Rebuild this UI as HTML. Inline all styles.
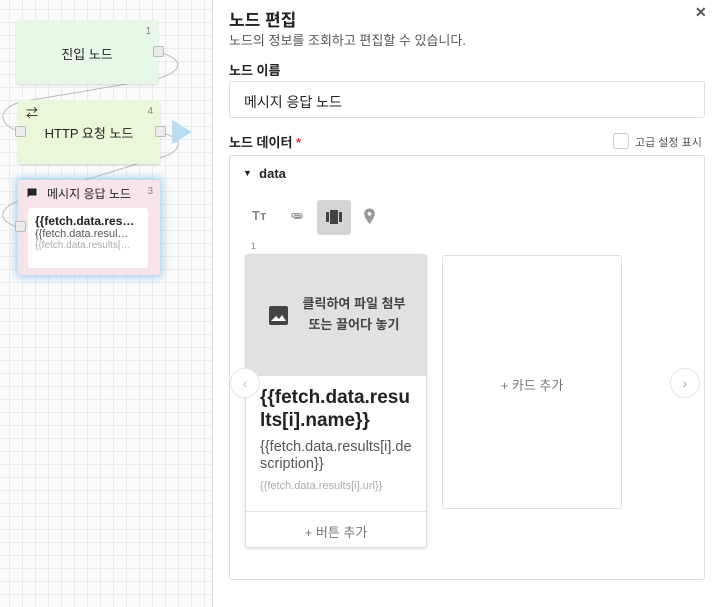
<!DOCTYPE html>
<html><head><meta charset="utf-8"><style>
*{box-sizing:border-box;margin:0;padding:0}
body{width:717px;height:607px;overflow:hidden;position:relative;background:#fff;font-family:"Liberation Sans","Noto Sans CJK KR",sans-serif;color:#222}
.canvas{position:absolute;left:0;top:0;width:213px;height:607px;background-color:#fbfbfb;background-image:linear-gradient(#ebebeb 1px,transparent 1px),linear-gradient(90deg,#ebebeb 1px,transparent 1px);background-size:13px 13px;background-position:-4px -4px;border-right:1px solid #d8d8d8}
.node{position:absolute;border-radius:3px;box-shadow:0 1px 2px rgba(0,0,0,.15);font-size:13px}
.num{position:absolute;right:7px;top:6px;font-size:10px;color:#888}
.port{position:absolute;width:11px;height:11px;background:#ececec;border:1px solid #bbb;border-radius:2px}
.abs{position:absolute}
</style></head><body>
<div class="canvas">
<svg class="abs" style="left:0;top:0" width="213" height="300">
<path d="M158 52 C190 60 180 75 150 80 L20 102 C-5 110 0 125 18 131" stroke="#bbb" fill="none" stroke-width="1"/>
<path d="M160 132 C190 140 180 155 150 160 L20 200 C-5 210 0 222 18 227" stroke="#bbb" fill="none" stroke-width="1"/>
<path d="M172 120 L192 132 L172 144 Z" fill="#b9dcf2"/>
</svg>
<div class="node" style="left:16px;top:20px;width:142px;height:64px;background:#e8f8e6"><span class="num">1</span><div class="abs" style="left:0;right:0;top:24px;text-align:center">진입 노드</div><div class="port" style="left:137px;top:26px"></div></div>
<div class="node" style="left:18px;top:100px;width:142px;height:64px;background:#eaf7d9"><span class="num">4</span><div class="abs" style="left:8px;top:4px;font-size:12px">⇄</div><div class="abs" style="left:0;right:0;top:23px;text-align:center">HTTP 요청 노드</div><div class="port" style="left:-3px;top:26px"></div><div class="port" style="left:137px;top:26px"></div></div>
<div class="node" style="left:18px;top:180px;width:142px;height:95px;background:#f6e4ea;box-shadow:0 0 8px 3px rgba(120,190,240,.6)"><span class="num">3</span>
<svg class="abs" style="left:8px;top:7px" width="12" height="12" viewBox="0 0 24 24"><path d="M3 3h18v14H7l-4 4z" fill="#222"/></svg>
<div class="abs" style="left:29px;top:5px;font-size:12px">메시지 응답 노드</div>
<div class="abs" style="left:10px;top:28px;width:120px;height:60px;background:#fff;border-radius:3px;padding:6px 7px;overflow:hidden;white-space:nowrap">
<div style="font-weight:bold;font-size:12px">{{fetch.data.res…</div>
<div style="font-size:11px;color:#555">{{fetch.data.resul…</div>
<div style="font-size:10px;color:#aaa">{{fetch.data.results[…</div></div>
<div class="port" style="left:-3px;top:41px"></div></div>
</div>

<div class="abs" style="left:229px;top:6px;font-size:17px;font-weight:bold">노드 편집</div>
<div class="abs" style="left:695px;top:4px;font-size:14px;font-weight:bold;color:#555">✕</div>
<div class="abs" style="left:229px;top:30px;font-size:13px;color:#555">노드의 정보를 조회하고 편집할 수 있습니다.</div>
<div class="abs" style="left:229px;top:60px;font-size:13px;font-weight:bold">노드 이름</div>
<div class="abs" style="left:229px;top:81px;width:476px;height:37px;border:1px solid #ddd;border-radius:3px;padding:10px 14px;font-size:14px">메시지 응답 노드</div>
<div class="abs" style="left:229px;top:132px;font-size:13px;font-weight:bold">노드 데이터 <span style="color:#d33">*</span></div>
<div class="abs" style="left:613px;top:133px;width:16px;height:16px;border:1px solid #ccc;border-radius:3px"></div>
<div class="abs" style="left:635px;top:134px;font-size:11px;color:#555">고급 설정 표시</div>
<div class="abs" style="left:229px;top:155px;width:476px;height:425px;border:1px solid #ddd;border-radius:3px"></div>
<div class="abs" style="left:243px;top:166px;font-size:13px;font-weight:bold"><span style="font-size:9px;vertical-align:2px">▼</span>&nbsp; data</div>
<div class="abs" style="left:252px;top:208px;font-size:13px;font-weight:bold;color:#888">Tт</div>
<svg class="abs" style="left:289px;top:209px" width="16" height="14" viewBox="0 0 24 24"><path d="M7 16h10a4 4 0 0 0 0-8H6a3 3 0 0 0 0 6h10a1.5 1.5 0 0 0 0-3H7" stroke="#999" stroke-width="2.2" fill="none"/></svg>
<div class="abs" style="left:317px;top:200px;width:34px;height:35px;background:#d5d5d5;border-radius:3px"></div>
<svg class="abs" style="left:325px;top:209px" width="18" height="16" viewBox="0 0 18 16"><rect x="5" y="1" width="8" height="14" fill="#444"/><rect x="1" y="3" width="3" height="10" fill="#444"/><rect x="14" y="3" width="3" height="10" fill="#444"/></svg>
<svg class="abs" style="left:363px;top:208px" width="13" height="17" viewBox="0 0 24 32"><path d="M12 1C6 1 2 5.5 2 11c0 7 10 19 10 19s10-12 10-19C22 5.5 18 1 12 1z" fill="#999"/><circle cx="12" cy="11" r="3.5" fill="#fff"/></svg>
<div class="abs" style="left:251px;top:241px;font-size:9px;color:#888">1</div>
<div class="abs" style="left:245px;top:254px;width:182px;height:294px;border:1px solid #ddd;border-radius:4px;box-shadow:0 1px 3px rgba(0,0,0,.15);overflow:hidden;background:#fff">
<div style="height:121px;background:#e1e1e3;position:relative">
<svg class="abs" style="left:23px;top:51px" width="19" height="19" viewBox="0 0 19 19"><rect x="0" y="0" width="19" height="19" rx="2" fill="#444"/><path d="M2 15l5-5 3 3 3-4 4 6z" fill="#fff"/></svg>
<div class="abs" style="left:48px;top:38px;width:120px;text-align:center;font-size:13px;font-weight:bold;color:#444;line-height:21px">클릭하여 파일 첨부<br>또는 끌어다 놓기</div></div>
<div style="padding:10px 14px 0;font-size:19px;font-weight:bold;line-height:23px;word-break:break-all">{{fetch.data.results[i].name}}</div>
<div style="padding:7px 14px 0;font-size:14.5px;color:#555;line-height:17px;word-break:break-all">{{fetch.data.results[i].description}}</div>
<div style="padding:7px 14px 0;font-size:11px;color:#aaa">{{fetch.data.results[i].url}}</div>
<div class="abs" style="left:0;right:0;top:256px;border-top:1px solid #e5e5e5;text-align:center;padding-top:10px;font-size:13px;color:#777">+ 버튼 추가</div>
</div>
<div class="abs" style="left:442px;top:255px;width:180px;height:254px;border:1px solid #e0e0e0;border-radius:3px;text-align:center;padding-top:119px;font-size:13px;color:#777">+ 카드 추가</div>
<div class="abs" style="left:230px;top:368px;width:30px;height:30px;border:1px solid #e5e5e5;border-radius:50%;background:#fff;text-align:center;line-height:28px;color:#bbb;font-size:14px">‹</div>
<div class="abs" style="left:670px;top:368px;width:30px;height:30px;border:1px solid #e5e5e5;border-radius:50%;background:#fff;text-align:center;line-height:28px;color:#aaa;font-size:14px">›</div>
</body></html>
